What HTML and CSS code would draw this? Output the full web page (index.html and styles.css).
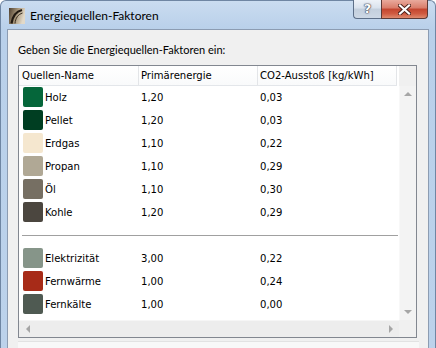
FILE: index.html
```html
<!DOCTYPE html>
<html lang="de">
<head>
  <meta charset="UTF-8">
  <title>Energiequellen-Faktoren</title>
  <link rel="stylesheet" href="styles.css">
</head>
<body>

<div class="window">
  <div class="titlebar">
    <svg class="app-icon" width="16" height="16" viewBox="0 0 16 16">
      <defs>
        <linearGradient id="ig" x1="0" y1="0" x2="1" y2="0.3">
          <stop offset="0" stop-color="#4e3f2e"/>
          <stop offset="0.55" stop-color="#a8977c"/>
          <stop offset="1" stop-color="#e2d9c8"/>
        </linearGradient>
      </defs>
      <rect x="0" y="0" width="16" height="16" fill="url(#ig)"/>
      <path d="M2.5 15.5 C3.5 8.5 7 3.5 13 2" stroke="#221a12" stroke-width="2.2" fill="none"/>
      <path d="M6 15.5 C6.5 10 9 6.5 13.5 5" stroke="#3a2f22" stroke-width="1" fill="none"/>
    </svg>
    <span class="title">Energiequellen-Faktoren</span>
    <div class="caption-buttons">
      <div class="btn-help">?</div>
      <div class="btn-close">
        <svg width="13" height="11" viewBox="0 0 13 11">
          <path d="M2 1.5 L11 9.5 M11 1.5 L2 9.5" stroke="#4a2019" stroke-width="4" stroke-linecap="square"/>
          <path d="M2 1.5 L11 9.5 M11 1.5 L2 9.5" stroke="#ffffff" stroke-width="2.2" stroke-linecap="square"/>
        </svg>
      </div>
    </div>
  </div>

  <div class="client">
    <p class="prompt">Geben Sie die Energiequellen-Faktoren ein:</p>

    <div class="listbox">
      <div class="list-header">
        <div class="hcell">Quellen-Name</div>
        <div class="hcell">Primärenergie</div>
        <div class="hcell">CO2-Ausstoß [kg/kWh]</div>
      </div>
      <div class="corner-top"></div>

      <div class="rows">
        <div class="row"><div class="cell name"><span class="swatch" style="background:#05663a"></span>Holz</div><div class="cell">1,20</div><div class="cell">0,03</div></div>
        <div class="row"><div class="cell name"><span class="swatch" style="background:#003e22"></span>Pellet</div><div class="cell">1,20</div><div class="cell">0,03</div></div>
        <div class="row"><div class="cell name"><span class="swatch" style="background:#f5e7cf"></span>Erdgas</div><div class="cell">1,10</div><div class="cell">0,22</div></div>
        <div class="row"><div class="cell name"><span class="swatch" style="background:#b0a895"></span>Propan</div><div class="cell">1,10</div><div class="cell">0,29</div></div>
        <div class="row"><div class="cell name"><span class="swatch" style="background:#766f63"></span>Öl</div><div class="cell">1,10</div><div class="cell">0,30</div></div>
        <div class="row"><div class="cell name"><span class="swatch" style="background:#4b463f"></span>Kohle</div><div class="cell">1,20</div><div class="cell">0,29</div></div>
        <div class="sep-row"><div class="sep-line"></div></div>
        <div class="row"><div class="cell name"><span class="swatch" style="background:#869589"></span>Elektrizität</div><div class="cell">3,00</div><div class="cell">0,22</div></div>
        <div class="row"><div class="cell name"><span class="swatch" style="background:#a72b18"></span>Fernwärme</div><div class="cell">1,00</div><div class="cell">0,24</div></div>
        <div class="row"><div class="cell name"><span class="swatch" style="background:#4f5a52"></span>Fernkälte</div><div class="cell">1,00</div><div class="cell">0,00</div></div>
      </div>

      <div class="vscroll">
        <div class="sb-btn"><span class="arrow-up"></span></div>
        <div class="sb-btn"><span class="arrow-down"></span></div>
      </div>

      <div class="hscroll">
        <div class="sb-btn"><span class="arrow-left"></span></div>
        <div class="sb-btn"><span class="arrow-right"></span></div>
      </div>
      <div class="corner-bottom"></div>
    </div>

    <div class="bottom-panel"></div>
  </div>
</div>

</body>
</html>
```

FILE: styles.css
```css
body {
  margin: 0;
  width: 436px;
  height: 348px;
  overflow: hidden;
  background-color: #ffffff;
}
.window {
  height: 348px;
  box-sizing: border-box;
  display: flex;
  flex-direction: column;
  padding: 0 6px;
  border: 1px solid #6f86a3;
  border-bottom: none;
  border-radius: 6px 6px 0 0;
  background: linear-gradient(to bottom, #cadcf0, #b9d0ea 28px, #bcd2eb);
}
.titlebar {
  height: 28px;
  flex-shrink: 0;
  display: flex;
  align-items: flex-start;
}
.app-icon {
  margin: 7px 0 0 2px;
}
.title {
  margin: 5px 0 0 5px;
  font-family: Lato, sans-serif;
  font-size: 12px;
  line-height: 20px;
  color: #000;
}
.caption-buttons {
  display: flex;
  margin: -1px 1px 0 auto;
}
.btn-help {
  width: 28px;
  height: 19px;
  box-sizing: border-box;
  border: 1px solid #5d6f88;
  border-top: none;
  border-right: none;
  border-radius: 0 0 0 4px;
  background: linear-gradient(to bottom, #eef2f8, #d9e2ed 45%, #c3cfdd 50%, #cdd8e5);
  text-align: center;
  font-family: "DejaVu Sans", sans-serif;
  font-weight: bold;
  font-size: 13px;
  line-height: 18px;
  color: #fff;
  text-shadow: 0 0 1px #334, 0 0 1px #334, 0 0 2px #556;
}
.btn-close {
  width: 47px;
  height: 19px;
  box-sizing: border-box;
  border: 1px solid #5d3a36;
  border-top: none;
  border-radius: 0 0 4px 0;
  background: linear-gradient(to bottom, #e9aa9c, #d97c69 45%, #c3452f 50%, #cf5a40 75%, #df8a6e);
  display: flex;
  align-items: center;
  justify-content: center;
}
.client {
  flex: 1;
  background-color: #f0f0f0;
  border: 1px solid #8c9cb2;
  border-bottom: none;
  padding-left: 10px;
}
.prompt {
  margin: 12px 0 8px 0;
  font-family: Lato, sans-serif;
  font-size: 11px;
  line-height: 15px;
  color: #000;
}
.listbox {
  width: 399px;
  height: 273px;
  box-sizing: border-box;
  border: 1px solid #828790;
  background-color: #fff;
  display: grid;
  grid-template-columns: 1fr 17px;
  grid-template-rows: 20px 1fr 17px;
  font-family: "DejaVu Sans", sans-serif;
  font-stretch: condensed;
  font-size: 11.2px;
  color: #000;
}
.list-header {
  display: grid;
  grid-template-columns: 120px 119px 1fr;
  margin-right: 2px;
  border-bottom: 1px solid #e3e6ea;
  background: linear-gradient(to bottom, #ffffff, #f9fafb);
}
.hcell {
  padding: 3px 0 0 3px;
  border-right: 1px solid #e3e5e8;
  white-space: nowrap;
}
.hcell + .hcell {
  padding-left: 2px;
}
.corner-top {
  background-color: #f0f0f0;
}
.rows {
  display: flex;
  flex-direction: column;
}
.row {
  height: 23px;
  display: grid;
  grid-template-columns: 120px 119px 1fr;
  align-items: center;
}
.cell {
  padding-left: 2px;
  white-space: nowrap;
}
.cell.name {
  display: flex;
  align-items: center;
  padding-left: 4px;
}
.swatch {
  width: 20px;
  height: 20px;
  margin: -1px 2px 0 0;
  border-radius: 2px;
}
.sep-row {
  height: 23px;
}
.sep-line {
  margin: 11px 1px 0 3px;
  height: 1px;
  background-color: #a0a0a0;
}
.vscroll {
  display: flex;
  flex-direction: column;
  justify-content: space-between;
  background-color: #f3f3f3;
  border-left: 1px solid #f8f8f8;
}
.hscroll {
  display: flex;
  justify-content: space-between;
  background-color: #ededed;
  border-top: 1px solid #f6f6f6;
}
.corner-bottom {
  background-color: #f0f0f0;
}
.sb-btn {
  width: 16px;
  height: 16px;
  display: flex;
  align-items: center;
  justify-content: center;
}
.hscroll .sb-btn {
  width: 17px;
}
.arrow-up {
  border-left: 4px solid transparent;
  border-right: 4px solid transparent;
  border-bottom: 4px solid #a6a6a6;
}
.arrow-down {
  border-left: 4px solid transparent;
  border-right: 4px solid transparent;
  border-top: 4px solid #a6a6a6;
}
.arrow-left {
  border-top: 4px solid transparent;
  border-bottom: 4px solid transparent;
  border-right: 4px solid #a6a6a6;
}
.arrow-right {
  border-top: 4px solid transparent;
  border-bottom: 4px solid transparent;
  border-left: 4px solid #a6a6a6;
}
.bottom-panel {
  width: 401px;
  height: 10px;
  margin-top: 3px;
  border-top: 1px solid #e2e2e2;
  background-color: #f8f8f8;
}
```
